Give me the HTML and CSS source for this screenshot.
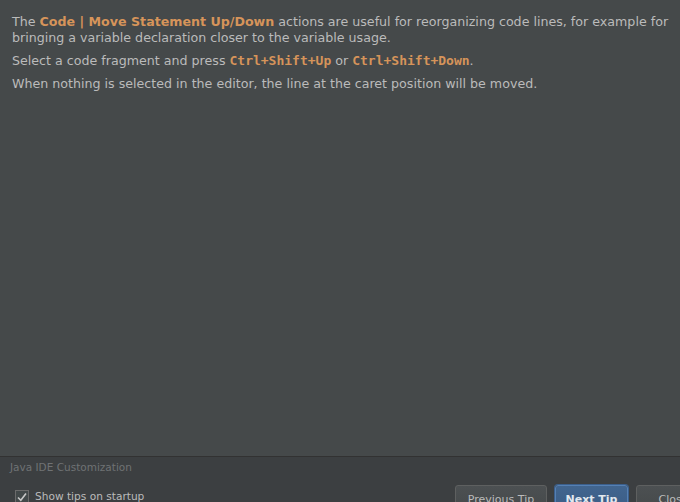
FILE: index.html
```html
<!DOCTYPE html>
<html>
<head>
<meta charset="utf-8">
<link rel="stylesheet" href="styles.css">
</head>
<body>
<div class="dialog">
  <div class="tip">
    <p>The <b class="act">Code | Move Statement Up/Down</b> actions are useful for reorganizing code lines, for example for bringing a variable declaration closer to the variable usage.</p>
    <p>Select a code fragment and press <span class="key">Ctrl+Shift+Up</span> or <span class="key">Ctrl+Shift+Down</span>.</p>
    <p>When nothing is selected in the editor, the line at the caret position will be moved.</p>
  </div>
  <div class="footer">
    <div class="source">Java IDE Customization</div>
    <div class="actions">
      <label class="check">
        <span class="box"><svg width="12" height="12" viewBox="0 0 12 12"><path d="M2 6.5 L4.8 9.3 L10 2.5" fill="none" stroke="#c8c8c8" stroke-width="1.6"/></svg></span>
        <span>Show tips on startup</span>
      </label>
      <div class="buttons">
        <button class="btn prev">Previous Tip</button>
        <button class="btn primary">Next Tip</button>
        <button class="btn close">Close</button>
      </div>
    </div>
  </div>
</div>
</body>
</html>
```
FILE: styles.css
```css
html, body {
  margin: 0;
  padding: 0;
  width: 680px;
  height: 502px;
  overflow: hidden;
  background: #3c3f41;
}
.dialog {
  width: 680px;
  height: 530px;
  display: flex;
  flex-direction: column;
  font-family: "DejaVu Sans", Verdana, sans-serif;
  color: #bbbbbb;
}
.tip {
  background: #45494a;
  height: 457px;
  box-sizing: border-box;
  padding: 14px 8px 0 12px;
  border-bottom: 1px solid #323232;
  font-size: 12.65px;
  line-height: 16px;
}
.tip p {
  margin: 0 0 7px 0;
}
.act {
  color: #d6945a;
  font-weight: bold;
}
.key {
  color: #d6945a;
  font-family: "DejaVu Sans Mono", monospace;
  font-weight: bold;
  font-size: 13px;
}
.footer {
  background: #3c3f41;
  flex: 1;
}
.source {
  font-size: 10.5px;
  color: #6f7274;
  padding: 2px 0 0 10px;
  height: 16px;
  line-height: 16px;
}
.actions {
  display: flex;
  justify-content: space-between;
  padding: 10px 0 0 15px;
}
.check {
  display: flex;
  align-items: flex-start;
  gap: 6px;
  font-size: 10.6px;
  margin-top: 5px;
  color: #bbbbbb;
}
.box {
  width: 12px;
  height: 12px;
  border: 1px solid #6b6b6b;
  background: #43494a;
  display: flex;
  align-items: center;
  justify-content: center;
}
.buttons {
  display: flex;
  gap: 8px;
  margin-right: -31px;
}
.btn {
  font-family: "DejaVu Sans", Verdana, sans-serif;
  font-size: 11px;
  color: #bbbbbb;
  height: 28px;
  padding: 0;
  border: 1px solid #5e6060;
  border-radius: 3px;
  background: linear-gradient(#4c5052, #45494a);
  text-align: center;
}
.btn.prev { width: 92px; }
.btn.close { width: 75px; }
.btn.primary {
  width: 73px;
  background: linear-gradient(#41658f, #3b5c85);
  color: #e2e8ef;
  font-weight: bold;
  border: 1px solid #5580b3;
  box-shadow: 0 0 0 1px #3b5f8c;
}
```
